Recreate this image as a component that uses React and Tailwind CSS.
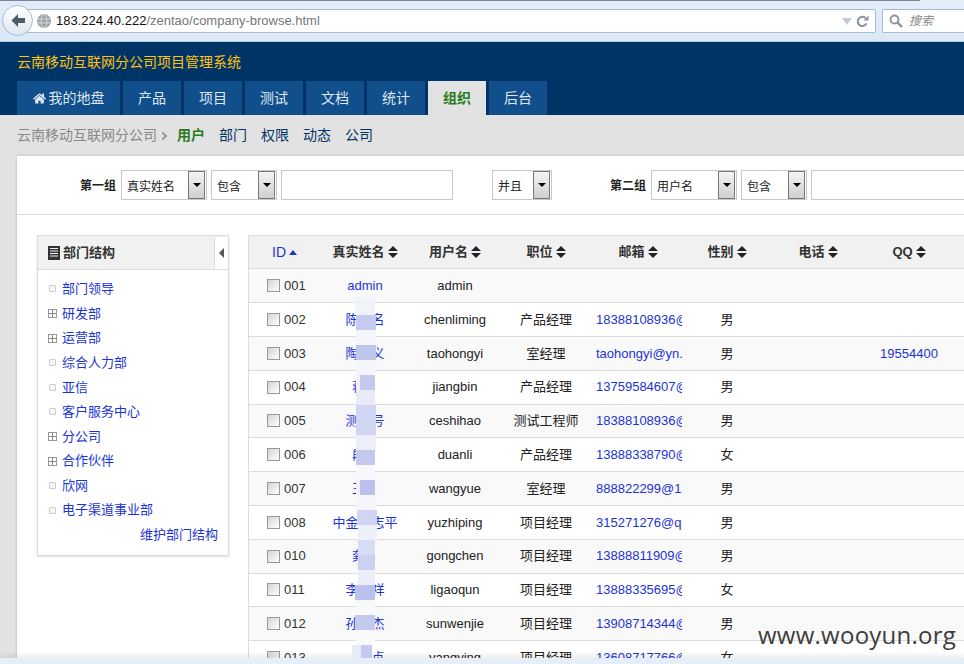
import React from "react";
import { FaHome } from "react-icons/fa";

const font = { fontFamily: '"Liberation Sans","Noto Sans CJK SC",sans-serif' };

const tabs = ["产品", "项目", "测试", "文档", "统计"];
const sub = ["部门", "权限", "动态", "公司"];
const tree = [
  ["部门领导", 0], ["研发部", 1], ["运营部", 1], ["综合人力部", 0], ["亚信", 0],
  ["客户服务中心", 0], ["分公司", 1], ["合作伙伴", 1], ["欣网", 0], ["电子渠道事业部", 0],
];
const rows = [
  ["001", "admin", "admin", "", "", "", ""],
  ["002", "陈　名", "chenliming", "产品经理", "18388108936@", "男", ""],
  ["003", "陶　义", "taohongyi", "室经理", "taohongyi@yn.", "男", "19554400"],
  ["004", "蒋　", "jiangbin", "产品经理", "13759584607@", "男", ""],
  ["005", "测　号", "ceshihao", "测试工程师", "18388108936@", "男", ""],
  ["006", "段　", "duanli", "产品经理", "13888338790@", "女", ""],
  ["007", "王　", "wangyue", "室经理", "888822299@13", "男", ""],
  ["008", "中金　志平", "yuzhiping", "项目经理", "315271276@qq", "男", ""],
  ["010", "龚　", "gongchen", "项目经理", "13888811909@", "男", ""],
  ["011", "李　祥", "ligaoqun", "项目经理", "13888335695@", "女", ""],
  ["012", "孙　杰", "sunwenjie", "项目经理", "13908714344@", "男", ""],
  ["013", "　　贞", "yangying", "项目经理", "13608717766@", "女", ""],
];
const heads = [
  ["真实姓名", "w-[90px]"], ["用户名", "w-[90px]"], ["职位", "w-[92px]"], ["邮箱", "w-[92px]"],
  ["性别", "w-[86px]"], ["电话", "w-[96px]"], ["QQ", "w-[86px]"],
];

function Select({ label, w }) {
  return (
    <div className={`flex h-[30px] shrink-0 items-center justify-between border border-[#c8c8c8] bg-white pr-px ${w}`}>
      <span className="pl-[5px] pt-[3px] text-[12px] text-[#222]">{label}</span>
      <span className="flex h-[28px] w-[17px] flex-col items-center border border-[#777] bg-gradient-to-b from-[#f4f4f4] to-[#cfcfcf] pt-[11px]">
        <span className="h-0 w-0 border-x-[4px] border-t-[4px] border-x-transparent border-t-black" />
      </span>
    </div>
  );
}

function SortIcon() {
  return (
    <svg width="10" height="12" viewBox="0 0 10 12">
      <path d="M5 0 10 5H0zM0 7h10l-5 5z" fill="#222" />
    </svg>
  );
}

const patches = [
  "top-[297px] left-[355px] w-[20px] h-[18px] bg-[#f1f3fb]",
  "top-[315px] left-[356px] w-[20px] h-[15px] bg-[#c5cbef]",
  "top-[330px] left-[356px] w-[20px] h-[15px] bg-[#f5f6fc]",
  "top-[345px] left-[356px] w-[20px] h-[15px] bg-[#bfc6ec]",
  "top-[360px] left-[356px] w-[20px] h-[15px] bg-[#f5f6fb]",
  "top-[375px] left-[360px] w-[15px] h-[15px] bg-[#c3caee]",
  "top-[375px] left-[356px] w-[4px] h-[15px] bg-[#f0f1fa]",
  "top-[390px] left-[356px] w-[19px] h-[15px] bg-[#e8eaf8]",
  "top-[405px] left-[356px] w-[20px] h-[30px] bg-[#d0d5f2]",
  "top-[435px] left-[356px] w-[20px] h-[15px] bg-[#eceefa]",
  "top-[450px] left-[356px] w-[19px] h-[15px] bg-[#c3caee]",
  "top-[465px] left-[356px] w-[19px] h-[15px] bg-[#f7f8fd]",
  "top-[480px] left-[360px] w-[15px] h-[15px] bg-[#b9c1ec]",
  "top-[480px] left-[356px] w-[4px] h-[15px] bg-[#f0f1fa]",
  "top-[495px] left-[356px] w-[20px] h-[15px] bg-[#f5f6fc]",
  "top-[510px] left-[357px] w-[20px] h-[15px] bg-[#d0d5f3]",
  "top-[525px] left-[358px] w-[19px] h-[15px] bg-[#eef0fb]",
  "top-[540px] left-[358px] w-[17px] h-[15px] bg-[#d9dcf5]",
  "top-[555px] left-[358px] w-[17px] h-[15px] bg-[#ccd1f1]",
  "top-[570px] left-[358px] w-[17px] h-[15px] bg-[#eceefa]",
  "top-[585px] left-[355px] w-[20px] h-[15px] bg-[#b9c1ec]",
  "top-[600px] left-[355px] w-[20px] h-[15px] bg-[#f8f9fd]",
  "top-[615px] left-[355px] w-[20px] h-[15px] bg-[#c3caee]",
  "top-[630px] left-[355px] w-[20px] h-[15px] bg-[#f8f9fd]",
  "top-[645px] left-[352px] w-[9px] h-[13px] bg-[#e8eaf8]",
  "top-[645px] left-[361px] w-[11px] h-[13px] bg-[#c3caee]",
];

export default function App() {
  return (
    <div style={font} className="relative flex h-[664px] w-[964px] flex-col overflow-hidden bg-[#e2e2e2]">
      {/* browser chrome */}
      <div className="relative flex h-[42px] shrink-0 items-start gap-[6px] border-b border-[#b8cce2] bg-gradient-to-b from-[#e2edf9] to-[#dbe8f7] pl-[16px] pt-[9px]">
        <div className="absolute left-0 top-0 h-px w-[920px] bg-[#7c8796]" />
        <div className="flex h-[24px] w-[860px] items-center justify-between rounded-r-[2px] border border-[#a9bbd2] bg-white pl-[39px] pr-[6px]">
          <span className="text-[13px] text-[#777]">
            <span className="text-[#111]">183.224.40.222</span>/zentao/company-browse.html
          </span>
          <span className="flex items-center gap-[4px]">
            <span className="h-0 w-0 border-x-[5px] border-t-[7px] border-x-transparent border-t-[#c3ccd6]" />
            <svg width="13" height="13" viewBox="0 0 13 13" fill="none">
              <path d="M10.5 8.5A4.6 4.6 0 1 1 9.5 3" stroke="#8a939c" strokeWidth="2" />
              <path d="M7.5 5.5h5v-5z" fill="#8a939c" />
            </svg>
          </span>
        </div>
        <div className="flex h-[24px] flex-1 items-center gap-[6px] rounded-l-[2px] border border-r-0 border-[#a9bbd2] bg-white pl-[6px]">
          <svg width="14" height="14" viewBox="0 0 14 14" fill="none">
            <circle cx="5.5" cy="5.5" r="4" stroke="#8a939c" strokeWidth="1.8" />
            <path d="M8.5 8.5 13 13" stroke="#8a939c" strokeWidth="2.4" />
          </svg>
          <span className="text-[12px] italic text-[#888]">搜索</span>
        </div>
        <div className="absolute left-[2px] top-[5px] flex h-[31px] w-[31px] items-center justify-center rounded-full border border-[#a9bbd2] bg-gradient-to-b from-white to-[#dfe7f1]">
          <svg width="16" height="15" viewBox="0 0 16 15">
            <path d="M8 1 1.5 7.5 8 14V10h7V5H8z" fill="#4d5a68" />
          </svg>
        </div>
        <div className="absolute left-[37px] top-[14px] flex h-[14px] w-[14px] items-center justify-center rounded-full bg-[#9ea3a8]">
          <svg width="14" height="14" viewBox="0 0 14 14" fill="none" stroke="#d5d8db" strokeWidth="1">
            <ellipse cx="7" cy="7" rx="3" ry="6.5" />
            <path d="M0.5 5h13M0.5 9h13" />
          </svg>
        </div>
      </div>

      {/* header */}
      <div className="flex h-[73px] shrink-0 flex-col justify-between bg-[#003366] pl-[17px]">
        <div className="pt-[10px] text-[14px] leading-[20px] text-[#ffc20e]">云南移动互联网分公司项目管理系统</div>
        <div className="flex gap-[3px] text-[14px]">
          <div className="flex h-[34px] w-[103px] items-center justify-center gap-[3px] bg-[#104f8c] text-[#dfe8f1]">
            <FaHome className="text-[13px]" />
            我的地盘
          </div>
          {tabs.map((t) => (
            <div key={t} className="flex h-[34px] w-[58px] items-center justify-center bg-[#104f8c] text-[#dfe8f1]">{t}</div>
          ))}
          <div className="flex h-[34px] w-[58px] items-center justify-center bg-[#e2e2e2] font-bold text-[#2a7a1f]">组织</div>
          <div className="flex h-[34px] w-[58px] items-center justify-center bg-[#104f8c] text-[#dfe8f1]">后台</div>
        </div>
      </div>

      {/* sub nav */}
      <div className="flex h-[41px] shrink-0 items-center pl-[17px] text-[14px] text-[#003366]">
        <span className="text-[#888]">云南移动互联网分公司</span>
        <span className="ml-[3px] h-[6px] w-[6px] rotate-45 border-r-2 border-t-2 border-[#999]" />
        <span className="ml-[11px] font-bold text-[#2a7a1f]">用户</span>
        {sub.map((s) => (
          <span key={s} className="ml-[14px]">{s}</span>
        ))}
      </div>

      {/* card */}
      <div className="ml-[17px] flex min-h-0 flex-1 flex-col overflow-hidden bg-white shadow-[0_0_3px_rgba(0,0,0,0.2)]">
        <div className="flex h-[59px] shrink-0 items-start border-b border-[#dedede] pt-[14px]">
          <span className="ml-[63px] mr-[4px] pt-[7px] text-[12px] font-bold leading-[18px] text-[#222]">第一组</span>
          <div className="ml-px shrink-0"><Select label="真实姓名" w="w-[86px]" /></div>
          <div className="w-[4px] shrink-0" />
          <Select label="包含" w="w-[66px]" />
          <div className="ml-[4px] h-[30px] w-[172px] shrink-0 border border-[#c8c8c8]" />
          <div className="ml-[39px] shrink-0"><Select label="并且" w="w-[60px]" /></div>
          <span className="ml-[58px] mr-[5px] shrink-0 pt-[7px] text-[12px] font-bold leading-[18px] text-[#222]">第二组</span>
          <Select label="用户名" w="w-[86px]" />
          <div className="w-[4px] shrink-0" />
          <Select label="包含" w="w-[66px]" />
          <div className="ml-[4px] h-[30px] flex-1 border border-r-0 border-[#c8c8c8]" />
        </div>

        <div className="flex min-h-0 flex-1 items-start gap-[19px] pl-[20px] pt-[20px]">
          {/* sidebar */}
          <div className="w-[192px] shrink-0 border border-[#dcdcdc] shadow-[0_1px_2px_rgba(0,0,0,0.12)]">
            <div className="flex h-[34px] items-center justify-between border-b border-[#dcdcdc] bg-[#f1f1f1] pl-[10px]">
              <span className="flex items-center gap-[3px] text-[13px] font-bold text-[#333]">
                <svg width="12" height="14" viewBox="0 0 12 14">
                  <path d="M0 0h12v14H0z" fill="#333" />
                  <path d="M2 2h8v1H2zM2 4.5h8v1H2zM2 7h8v1H2zM2 9.5h8v1H2z" fill="#f1f1f1" />
                </svg>
                部门结构
              </span>
              <span className="flex h-[32px] w-[14px] items-center justify-center border-l border-[#dcdcdc] bg-white">
                <span className="h-0 w-0 border-y-[5px] border-r-[5px] border-y-transparent border-r-[#555]" />
              </span>
            </div>
            <div className="pl-[10px] pr-[10px] pt-[6.6px]">
              {tree.map(([t, plus]) => (
                <div key={t} className="flex h-[24.6px] items-center gap-[5px] text-[13px] text-[#1c33d6]">
                  {plus ? (
                    <span className="flex h-[9px] w-[9px] items-center justify-center border border-[#999] leading-none">
                      <svg width="7" height="7" viewBox="0 0 7 7"><path d="M3 0h1v7H3zM0 3h7v1H0z" fill="#888" /></svg>
                    </span>
                  ) : (
                    <span className="ml-px mr-px h-[7px] w-[7px] rounded-[1px] border border-[#ccc] bg-[#f6f6f6]" />
                  )}
                  <span>{t}</span>
                </div>
              ))}
              <div className="pb-[8.4px] text-right text-[13px] leading-[24px] text-[#1c33d6]">维护部门结构</div>
            </div>
          </div>

          {/* table */}
          <div className="w-[716px] shrink-0 border-l border-[#dcdcdc] text-[13px] text-[#222]">
            <div className="flex h-[34.4px] items-center border-y border-[#dcdcdc] bg-[#f1f1f1] font-bold text-[#333]">
              <div className="flex w-[71px] items-center justify-center gap-[3px] text-[14px] font-normal text-[#1c33d6]">
                ID
                <span className="h-0 w-0 border-x-[4px] border-b-[5px] border-x-transparent border-b-[#1c33d6]" />
              </div>
              {heads.map(([h, w]) => (
                <div key={h} className={`flex items-center justify-center gap-[3px] ${w}`}>{h}<SortIcon /></div>
              ))}
            </div>
            {rows.map((r, i) => (
              <div key={r[0]} className={`flex h-[33.8px] items-center border-b border-[#dcdcdc] ${i % 2 === 0 ? "bg-[#f9f9f9]" : "bg-white"}`}>
                <div className="flex w-[71px] items-center gap-[4px] pl-[18px] text-[#333]">
                  <span className="h-[13px] w-[13px] border border-[#999] bg-gradient-to-br from-[#d4d4d4] to-white" />
                  {r[0]}
                </div>
                <div className="w-[90px] whitespace-pre text-center text-[#1c33d6]">{r[1]}</div>
                <div className="w-[90px] text-center">{r[2]}</div>
                <div className="w-[92px] text-center">{r[3]}</div>
                <div className="w-[92px] pl-[4px] text-[#1c33d6]">
                  <div className="w-[86px] overflow-hidden whitespace-nowrap">{r[4]}</div>
                </div>
                <div className="w-[86px] text-center">{r[5]}</div>
                <div className="w-[96px]" />
                <div className="w-[86px] text-center text-[#1c33d6]">{r[6]}</div>
              </div>
            ))}
          </div>
        </div>
      </div>

      <div className="h-[6px] shrink-0 bg-[#e6eff9] shadow-[0_-3px_5px_rgba(0,0,0,0.08)]" />

      {/* redaction mosaic */}
      {patches.map((p) => (
        <div key={p} className={`absolute ${p}`} />
      ))}

      <div className="absolute left-[758px] top-[617px] text-[24px] leading-[36px] tracking-[0.25px] text-[#3d3d3d] [font-family:'Open_Sans',sans-serif]">
        www.wooyun.org
      </div>
    </div>
  );
}
